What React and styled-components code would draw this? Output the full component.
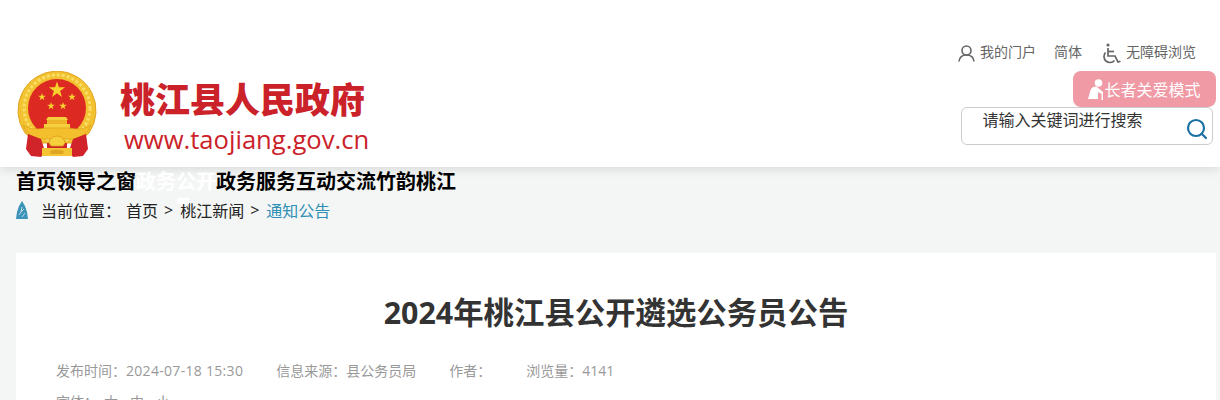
import React from "react";
import styled, { createGlobalStyle } from "styled-components";
import { Search } from "lucide-react";

const GlobalStyle = createGlobalStyle`
  html, body {
    margin: 0;
    padding: 0;
    background: #f4f6f5;
    font-family: "Open Sans", "Noto Sans CJK SC", sans-serif;
    overflow: hidden;
  }
`;

const navItems = [
  { label: "首页" },
  { label: "领导之窗" },
  { label: "政务公开", active: true },
  { label: "政务服务" },
  { label: "互动交流" },
  { label: "竹韵桃江" },
];

const starPoints = (cx, cy, r) => {
  const pts = [];
  for (let i = 0; i < 10; i++) {
    const radius = i % 2 === 0 ? r : r * 0.382;
    const angle = (Math.PI / 5) * i - Math.PI / 2;
    pts.push(`${cx + radius * Math.cos(angle)},${cy + radius * Math.sin(angle)}`);
  }
  return pts.join(" ");
};

const Emblem = () => (
  <svg width="80" height="87" viewBox="0 0 80 87">
    <path d="M40 0 A39.5 39.5 0 0 1 72 62 L60 72 H20 L8 62 A39.5 39.5 0 0 1 40 0 Z" fill="#f2c230" stroke="#e0a524" strokeWidth="1" />
    <circle cx="40" cy="37" r="33" fill="none" stroke="#f9dd66" strokeWidth="3" strokeDasharray="3 2" />
    <circle cx="40" cy="37" r="29" fill="#dc2a22" />
    <polygon points={starPoints(40, 19, 8.5)} fill="#f8d32e" />
    <polygon points={starPoints(25, 26, 4)} fill="#f8d32e" />
    <polygon points={starPoints(55, 26, 4)} fill="#f8d32e" />
    <polygon points={starPoints(34, 35, 4)} fill="#f8d32e" />
    <polygon points={starPoints(46, 35, 4)} fill="#f8d32e" />
    <path d="M31 46 H49 L51 49 H29 Z" fill="#f6cf3c" />
    <rect x="30" y="49" width="20" height="4" fill="#eeb42a" />
    <rect x="27" y="53" width="26" height="4" fill="#f6cf3c" />
    <path d="M6 54 Q14 60 28 57 H52 Q66 60 74 54 Q70 66 56 68 H24 Q10 66 6 54 Z" fill="#f4bf2c" stroke="#d99a1c" strokeWidth="0.6" />
    <path d="M11 63 L24 68 L28 80 L24 86 L14 85 L9 78 Z" fill="#d1232a" />
    <path d="M69 63 L56 68 L52 80 L56 86 L66 85 L71 78 Z" fill="#d1232a" />
    <path d="M25 77 H55 V85 H25 Z" fill="#f4c534" />
    <path d="M30 72 H50 V77 H30 Z" fill="#d1232a" />
    <path d="M32 72 A8 7 0 0 1 48 72 L46 75 H34 Z" fill="#f6cf3c" stroke="#d99a1c" strokeWidth="0.8" />
    <path d="M33 80 Q40 77 47 80 L46 83 H34 Z" fill="#e0a524" />
  </svg>
);

const UserIcon = () => (
  <svg width="17" height="17" viewBox="0 0 17 17" fill="none" stroke="#666" strokeWidth="1.6">
    <circle cx="8.5" cy="5.5" r="4.5" />
    <path d="M1 16.5 C1.5 12 4.5 10 8.5 10 S15.5 12 16 16.5" />
  </svg>
);

const WheelchairIcon = () => (
  <svg width="21" height="22" viewBox="0 0 21 22" fill="none" stroke="#666" strokeWidth="1.7">
    <circle cx="8" cy="2" r="1.6" fill="#666" stroke="none" />
    <path d="M8 5 V13 H15 L18 19 L20.5 18.3" />
    <path d="M8 8.5 H14" />
    <path d="M5.5 9.5 A6 6 0 1 0 14.5 17.5" />
  </svg>
);

const ElderIcon = () => (
  <svg width="16" height="21" viewBox="0 0 16 21" fill="#fff">
    <circle cx="10.5" cy="4" r="3.8" />
    <path d="M0 20 L2 13 C3 8 6 7 9 8 L15 13 V21 H13.5 V15 L10 13 V20 Z" />
  </svg>
);

const LeafIcon = () => (
  <svg width="12" height="18" viewBox="0 0 12 18">
    <path d="M6 0 L9 5 L11 11 L12 18 H0 L1 11 L3 5 Z" fill="#3a93b9" />
    <path d="M6 6 L5 11 L3 14 M5 11 L8 8 M6 16 L9 12" fill="none" stroke="#cfe5ee" strokeWidth="0.9" />
  </svg>
);

const App = () => (
  <>
    <GlobalStyle />
    <Header>
      <Logo>
        <Emblem />
        <LogoText>
          <LogoTitle>桃江县人民政府</LogoTitle>
          <LogoUrl>www.taojiang.gov.cn</LogoUrl>
        </LogoText>
      </Logo>
      <Tools>
        <TopLinks>
          <TopLink>
            <UserIcon />
            我的门户
          </TopLink>
          <TopLink>简体</TopLink>
          <TopLink>
            <WheelchairIcon />
            无障碍浏览
          </TopLink>
        </TopLinks>
        <ElderButton>
          <ElderIcon />
          长者关爱模式
        </ElderButton>
        <SearchBox>
          <SearchHint>请输入关键词进行搜索</SearchHint>
          <SearchIcon>
            <Search size={24} strokeWidth={2.2} />
          </SearchIcon>
        </SearchBox>
      </Tools>
    </Header>
    <Nav>
      {navItems.map((item) => (
        <NavItem key={item.label} $active={item.active}>
          {item.label}
        </NavItem>
      ))}
    </Nav>
    <Crumbs>
      <LeafIcon />
      <CrumbLabel>当前位置：</CrumbLabel>
      <span>首页</span>
      <CrumbSep>&gt;</CrumbSep>
      <span>桃江新闻</span>
      <CrumbSep>&gt;</CrumbSep>
      <CrumbCurrent>通知公告</CrumbCurrent>
    </Crumbs>
    <Article>
      <Title>2024年桃江县公开遴选公务员公告</Title>
      <Meta>
        <span>
          发布时间：<MetaDate>2024-07-18 15:30</MetaDate>
        </span>
        <span>信息来源：县公务员局</span>
        <MetaAuthor>作者：</MetaAuthor>
        <span>浏览量：4141</span>
      </Meta>
      <FontSizes>
        <FontLabel>字体：</FontLabel>
        <span>大</span>
        <span>中</span>
        <span>小</span>
      </FontSizes>
    </Article>
  </>
);

export default App;

const Header = styled.header`
  height: 167px;
  box-sizing: border-box;
  background: #fff;
  box-shadow: 0 2px 10px rgba(0, 0, 0, 0.12);
  display: flex;
  justify-content: space-between;
  position: relative;
  padding: 0 4px 0 16px;
`;

const Logo = styled.div`
  display: flex;
  gap: 23px;
  padding: 71px 0 0 1px;
`;

const LogoText = styled.div`
  display: flex;
  flex-direction: column;
  color: #cb2129;
`;

const LogoTitle = styled.div`
  font-family: "Noto Sans CJK SC", sans-serif;
  font-size: 35px;
  font-weight: 900;
  line-height: 54px;
`;

const LogoUrl = styled.div`
  font-size: 25.6px;
  line-height: 30px;
  margin: 0 0 0 4px;
`;

const Tools = styled.div`
  display: flex;
  flex-direction: column;
  align-items: flex-end;
  padding-top: 40px;
`;

const TopLinks = styled.div`
  display: flex;
  gap: 18px;
  height: 31px;
  padding-right: 20px;
`;

const TopLink = styled.a`
  display: flex;
  align-items: center;
  height: 22px;
  gap: 5px;
  font-size: 14px;
  color: #666;

  svg {
    margin-top: 5px;
  }
`;

const ElderButton = styled.div`
  width: 143px;
  height: 36px;
  box-sizing: border-box;
  display: flex;
  align-items: center;
  justify-content: center;
  background: #f09aa5;
  border-radius: 8px;
  color: #fff;
  font-size: 16px;
`;

const SearchBox = styled.div`
  width: 252px;
  height: 38px;
  box-sizing: border-box;
  margin-right: 3px;
  border: 1px solid #ccc;
  border-radius: 6px;
  background: #fff;
  display: flex;
  justify-content: space-between;
  padding: 0 3px 0 20.5px;
`;

const SearchHint = styled.span`
  font-size: 16px;
  line-height: 25px;
  color: #333;
`;

const SearchIcon = styled.span`
  display: flex;
  align-items: flex-end;
  padding-bottom: 3px;
  color: #1a6fa3;
`;

const Nav = styled.nav`
  display: flex;
  padding: 3px 0 0 16px;
  height: 24px;
`;

const NavItem = styled.a`
  position: relative;
  font-size: 20px;
  font-weight: 700;
  line-height: 24px;
  color: ${(p) => (p.$active ? "#fff" : "#000")};

  &::after {
    content: "";
    display: ${(p) => (p.$active ? "block" : "none")};
    position: absolute;
    left: 41px;
    top: 28px;
    width: 12px;
    height: 6px;
    background: #fff;
  }
`;

const Crumbs = styled.div`
  display: flex;
  align-items: center;
  height: 24px;
  margin-top: 4px;
  padding-left: 16px;
  font-size: 16px;
  color: #222;
`;

const CrumbLabel = styled.span`
  width: 85px;
  margin-left: 13px;
`;

const CrumbSep = styled.span`
  margin: 0 7px 0 6px;
`;

const CrumbCurrent = styled.span`
  color: #2f8fb5;
`;

const Article = styled.main`
  margin: 31px 4px 0 16px;
  background: #fff;
  padding: 39px 40px 0;
`;

const Title = styled.h1`
  margin: 0;
  font-size: 30.4px;
  font-weight: 700;
  line-height: 42px;
  text-align: center;
  color: #333;
`;

const Meta = styled.div`
  display: flex;
  gap: 33px;
  margin-top: 25px;
  font-size: 14px;
  line-height: 24px;
  color: #999;
`;

const MetaDate = styled.span`
  letter-spacing: 0.3px;
`;

const MetaAuthor = styled.span`
  min-width: 44px;
`;

const FontSizes = styled.div`
  display: flex;
  gap: 12px;
  margin-top: 7px;
  font-size: 14px;
  line-height: 24px;
  color: #999;
`;

const FontLabel = styled.span`
  margin-right: -6px;
`;
